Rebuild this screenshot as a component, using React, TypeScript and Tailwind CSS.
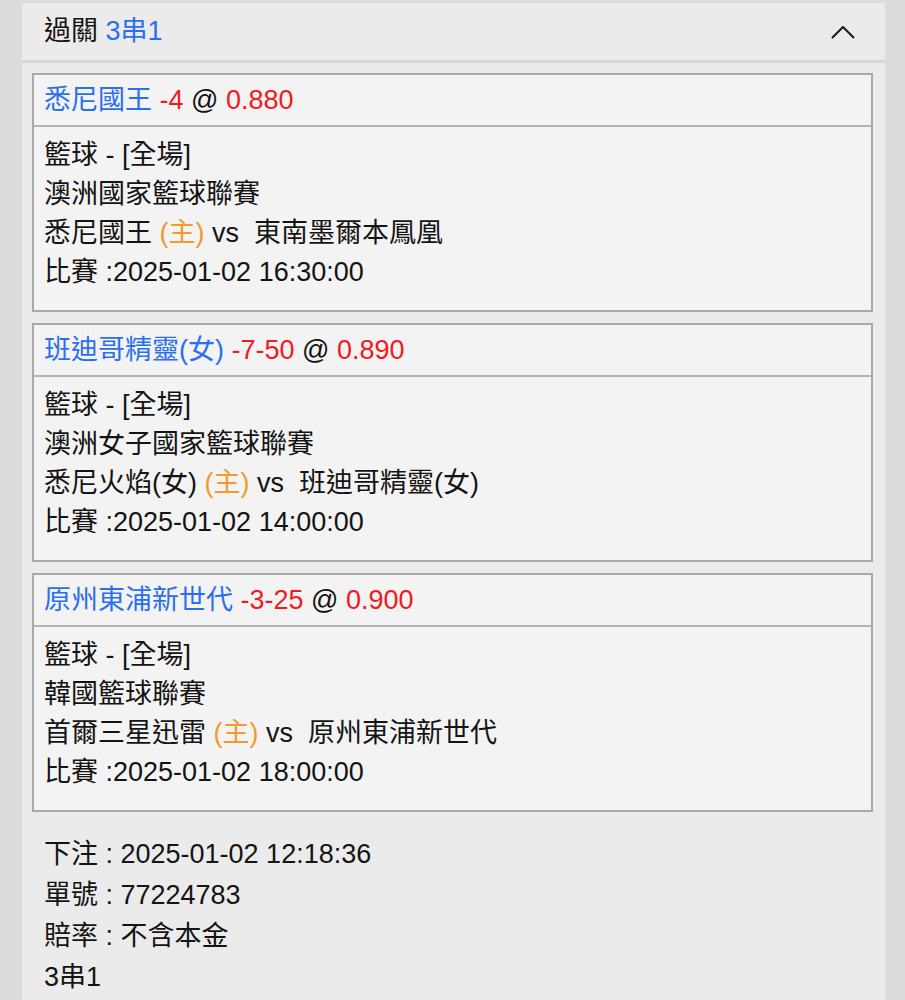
import React from "react";

type Leg = {
  pick: string;
  line: string;
  odds: string;
  league: string;
  home: string;
  away: string;
  time: string;
};

const legs: Leg[] = [
  {
    pick: "悉尼國王",
    line: "-4",
    odds: "0.880",
    league: "澳洲國家籃球聯賽",
    home: "悉尼國王",
    away: "東南墨爾本鳳凰",
    time: "2025-01-02 16:30:00",
  },
  {
    pick: "班迪哥精靈(女)",
    line: "-7-50",
    odds: "0.890",
    league: "澳洲女子國家籃球聯賽",
    home: "悉尼火焰(女)",
    away: "班迪哥精靈(女)",
    time: "2025-01-02 14:00:00",
  },
  {
    pick: "原州東浦新世代",
    line: "-3-25",
    odds: "0.900",
    league: "韓國籃球聯賽",
    home: "首爾三星迅雷",
    away: "原州東浦新世代",
    time: "2025-01-02 18:00:00",
  },
];

function LegCard({ leg }: { leg: Leg }) {
  return (
    <div className="border-2 border-[#a9a9a9] bg-[#f3f3f3]">
      <div className="border-b-2 border-[#b4b4b4] px-[10px] h-[52px] flex items-center whitespace-pre">
        <span className="text-[#2a6ef2]">{leg.pick}</span>
        <span className="text-[#ef1a22]"> {leg.line}</span>
        <span className="text-[#111]"> @ </span>
        <span className="text-[#ef1a22]">{leg.odds}</span>
      </div>
      <div className="px-[10px] pt-[9px] pb-[18px] text-[#141414] leading-[39px] whitespace-pre">
        <div>籃球 - [全場]</div>
        <div>{leg.league}</div>
        <div>
          {leg.home} <span className="text-[#f39a2e]">(主)</span> vs  {leg.away}
        </div>
        <div>比賽 :{leg.time}</div>
      </div>
    </div>
  );
}

export default function App() {
  return (
    <div
      className="min-h-[1000px] bg-[#dcdcdc] pt-[3px] pl-[22px] pr-[20px] text-[27px]"
      style={{ fontFamily: '"Liberation Sans", "Noto Sans CJK TC", sans-serif' }}
    >
      <div className="bg-[#ebebeb] min-h-[997px]">
        <div className="h-[60px] flex items-center justify-between pl-[22px] pr-[30px] border-b-[3px] border-[#d6d6d6]">
          <div className="text-[#141414] whitespace-pre">
            過關 <span className="text-[#2a6ef2]">3串1</span>
          </div>
          <svg width="24" height="14" viewBox="0 0 24 14" fill="none">
            <path d="M1.5 12.5 L12 2 L22.5 12.5" stroke="#1a1a1a" strokeWidth="2" strokeLinecap="round" strokeLinejoin="round" />
          </svg>
        </div>
        <div className="pl-[10px] pr-[12px] pt-[10px] flex flex-col gap-[11px]">
          {legs.map((l, i) => (
            <LegCard key={i} leg={l} />
          ))}
        </div>
        <div className="pl-[22px] pt-[22px] text-[#141414] leading-[41px]">
          <div>下注 : 2025-01-02 12:18:36</div>
          <div>單號 : 77224783</div>
          <div>賠率 : 不含本金</div>
          <div>3串1</div>
        </div>
      </div>
    </div>
  );
}
